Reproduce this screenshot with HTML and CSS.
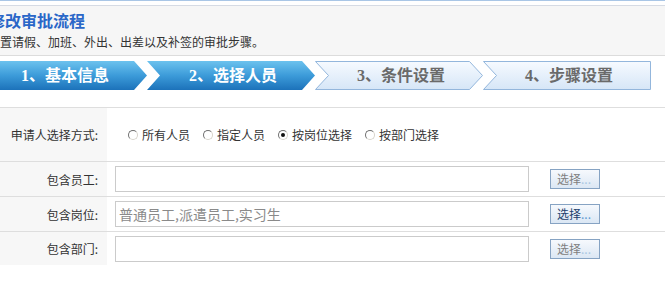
FILE: index.html
```html
<!DOCTYPE html>
<html lang="zh-CN">
<head>
<meta charset="utf-8">
<title>修改审批流程</title>
<link rel="stylesheet" href="styles.css">
</head>
<body>
<svg class="defs" width="0" height="0" aria-hidden="true">
  <defs>
    <linearGradient id="gActive" x1="0" y1="0" x2="0" y2="1">
      <stop offset="0" stop-color="#6cc2ee"/>
      <stop offset="0.5" stop-color="#3c9bd9"/>
      <stop offset="1" stop-color="#1c72ba"/>
    </linearGradient>
    <linearGradient id="gIdle" x1="0" y1="0" x2="0" y2="1">
      <stop offset="0" stop-color="#f6faff"/>
      <stop offset="1" stop-color="#d6e6f7"/>
    </linearGradient>
  </defs>
</svg>
<div class="topline"></div>
<div class="header">
  <h1 class="title">修改审批流程</h1>
  <p class="subtitle">设置请假、加班、外出、出差以及补签的审批步骤。</p>
</div>

<div class="steps">
  <div class="step active">
    <svg class="step-bg" viewBox="0 0 168 29" width="168" height="29"><polygon points="0,0 155,0 168,14.5 155,29 0,29 13,14.5" fill="url(#gActive)"/></svg>
    <span class="step-label">1、基本信息</span>
  </div>
  <div class="step active">
    <svg class="step-bg" viewBox="0 0 168 29" width="168" height="29"><polygon points="0,0 155,0 168,14.5 155,29 0,29 13,14.5" fill="url(#gActive)"/></svg>
    <span class="step-label">2、选择人员</span>
  </div>
  <div class="step idle">
    <svg class="step-bg" viewBox="0 0 168 29" width="168" height="29"><polygon points="0.5,0.5 154.5,0.5 167.5,14.5 154.5,28.5 0.5,28.5 13.5,14.5" fill="url(#gIdle)" stroke="#93b6dc" stroke-width="1"/></svg>
    <span class="step-label">3、条件设置</span>
  </div>
  <div class="step idle">
    <svg class="step-bg" viewBox="0 0 168 29" width="168" height="29"><polygon points="0.5,0.5 167.5,0.5 167.5,28.5 0.5,28.5 13.5,14.5" fill="url(#gIdle)" stroke="#93b6dc" stroke-width="1"/></svg>
    <span class="step-label">4、步骤设置</span>
  </div>
</div>

<div class="form">
  <div class="row row-tall">
    <div class="label">申请人选择方式:</div>
    <div class="field radios">
      <label class="radio"><span class="dot"></span>所有人员</label>
      <label class="radio"><span class="dot"></span>指定人员</label>
      <label class="radio"><span class="dot checked"></span>按岗位选择</label>
      <label class="radio"><span class="dot"></span>按部门选择</label>
    </div>
  </div>
  <div class="row">
    <div class="label">包含员工:</div>
    <div class="field">
      <div class="input"></div>
      <span class="btn disabled">选择<span class="ell">...</span></span>
    </div>
  </div>
  <div class="row">
    <div class="label">包含岗位:</div>
    <div class="field">
      <div class="input">普通员工,派遣员工,实习生</div>
      <span class="btn">选择<span class="ell">...</span></span>
    </div>
  </div>
  <div class="row last">
    <div class="label">包含部门:</div>
    <div class="field">
      <div class="input"></div>
      <span class="btn disabled">选择<span class="ell">...</span></span>
    </div>
  </div>
</div>
</body>
</html>
```
FILE: styles.css
```css
* { box-sizing: border-box; }
html, body { margin: 0; padding: 0; background: #fff; }
body {
  width: 665px;
  height: 285px;
  overflow: hidden;
  font-family: "Noto Sans CJK SC", "Liberation Sans", sans-serif;
  font-size: 12px;
  color: #333;
}
.defs { position: absolute; width: 0; height: 0; }

.topline { height: 1px; background: #a9c6e6; }

.header {
  margin-top: 4px;
  height: 51px;
  border-top: 1px solid #d6dbe4;
  border-bottom: 1px solid #dcdcdc;
  background: #f6f6f6;
  padding: 3px 0 0 0;
  margin-left: 0;
}
.title {
  margin: 0 0 0 -11px;
  font-size: 16px;
  line-height: 22px;
  font-weight: bold;
  color: #2a67c8;
}
.subtitle {
  margin: 3px 0 0 -12px;
  font-size: 12px;
  line-height: 16px;
  color: #333;
}

.steps {
  display: flex;
  margin: 5px 0 0 -21px;
  height: 29px;
}
.step {
  position: relative;
  flex: none;
  width: 168px;
  height: 29px;
  display: flex;
  align-items: center;
  justify-content: center;
}
.step-bg { position: absolute; left: 0; top: 0; }
.step-label {
  position: relative;
  font-family: "Liberation Serif", "Noto Sans CJK SC", serif;
  font-size: 16px;
  font-weight: bold;
  line-height: 29px;
  padding-left: 4px;
}
.step.active .step-label { color: #fff; }
.step.idle .step-label { color: #6a6a6a; }

.form {
  margin-top: 17px;
  border-top: 1px solid #dedede;
}
.row {
  display: flex;
  height: 35px;
  border-bottom: 1px solid #dedede;
}
.row.row-tall { height: 54px; }
.row.last { border-bottom: none; height: 33px; }
.label {
  flex: none;
  width: 107px;
  background: #f7f7f7;
  text-align: right;
  padding-right: 9px;
  display: flex;
  align-items: center;
  justify-content: flex-end;
  color: #333;
}
.field {
  flex: 1;
  display: flex;
  align-items: center;
  padding-left: 8px;
}
.radios { padding-left: 21px; }
.radio {
  display: flex;
  align-items: center;
  margin-right: 13px;
  color: #333;
}
.dot {
  position: relative;
  width: 10px;
  height: 10px;
  border-radius: 50%;
  border: 1px solid;
  border-color: #6f6f6f #d8d4cc #d8d4cc #6f6f6f;
  background: #fff;
  margin-right: 4px;
}
.dot.checked::after {
  content: "";
  position: absolute;
  left: 2px;
  top: 2px;
  width: 4px;
  height: 4px;
  border-radius: 50%;
  background: #111;
}
.input {
  width: 414px;
  height: 26px;
  border: 1px solid #cbcbcb;
  background: #fff;
  font-size: 14px;
  line-height: 24px;
  color: #8a8a8a;
  padding-left: 3px;
}
.btn {
  margin-left: 21px;
  width: 50px;
  height: 20px;
  border: 1px solid #86a3c3;
  background: linear-gradient(to bottom, #f6f9fd, #dbe7f4);
  font-size: 12px;
  line-height: 18px;
  padding-left: 6px;
  color: #1d3f6c;
}
.btn .ell { color: #5c9ad2; }
.btn.disabled { color: #808080; }
.btn.disabled .ell { color: #a9c7e2; }
```
